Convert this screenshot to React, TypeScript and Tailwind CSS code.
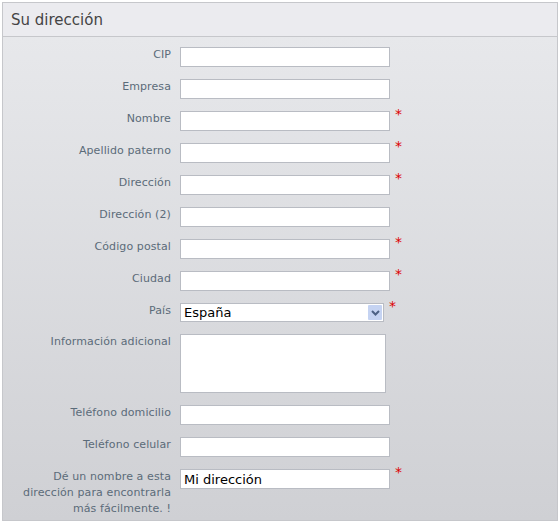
const fields = [
  { label: "CIP", req: false },
  { label: "Empresa", req: false },
  { label: "Nombre", req: true },
  { label: "Apellido paterno", req: true },
  { label: "Dirección", req: true },
  { label: "Dirección (2)", req: false },
  { label: "Código postal", req: true },
  { label: "Ciudad", req: true },
];

function Star() {
  return <span className="ml-[5px] -mt-[4px] text-[14px] leading-none text-[#dd0000]">*</span>;
}

function Row({ label, children }: { label: React.ReactNode; children: React.ReactNode }) {
  return (
    <div className="flex shrink-0 items-start">
      <div className="w-[177px] shrink-0 pl-[10px] pr-[9px] text-right text-[11px] leading-[16px] tracking-[0.1px] text-[#5b6b79]">
        {label}
      </div>
      <div className="flex items-start">{children}</div>
    </div>
  );
}

export default function App() {
  return (
    <div className="h-[522px] overflow-hidden pl-[2px] pr-[2px] pt-[2px] font-['DejaVu_Sans',sans-serif]">
      <div className="flex h-[519px] w-[556px] flex-col overflow-hidden border border-[#c6c7cb]">
        <div className="h-[34px] shrink-0 border-b border-[#c6c7cb] bg-[#ebebef] pl-[8px] pt-[8px] text-[15px] leading-[18px] text-[#444444]">
          Su dirección
        </div>
        <div className="flex flex-1 flex-col gap-[12px] bg-gradient-to-b from-[#e7e8eb] to-[#cfd0d4] pt-[10px]">
          {fields.map((f) => (
            <Row key={f.label} label={f.label}>
              <input className="h-[20px] w-[210px] border border-[#b9bcc3] bg-white" />
              {f.req && <Star />}
            </Row>
          ))}
          <Row label="País">
            <div className="flex h-[19px] w-[204px] items-center justify-between border border-[#b9bcc3] bg-white pl-[3px] pr-[1px]">
              <span className="text-[13px] leading-none text-black">España</span>
              <span className="flex h-[15px] w-[14px] items-center justify-center rounded-[1px] bg-[#c5d3f2]">
                <svg width="9" height="6" viewBox="0 0 9 6">
                  <path d="M1 1 L4.5 4.5 L8 1" stroke="#4d6185" strokeWidth="2" fill="none" />
                </svg>
              </span>
            </div>
            <Star />
          </Row>
          <Row label="Información adicional">
            <textarea className="h-[59px] w-[206px] resize-none border border-[#b9bcc3] bg-white" />
          </Row>
          <Row label="Teléfono domicilio">
            <input className="h-[20px] w-[210px] border border-[#b9bcc3] bg-white" />
          </Row>
          <Row label="Teléfono celular">
            <input className="h-[20px] w-[210px] border border-[#b9bcc3] bg-white" />
          </Row>
          <Row label="Dé un nombre a esta dirección para encontrarla más fácilmente. !">
            <input
              defaultValue="Mi dirección"
              className="h-[20px] w-[210px] border border-[#b9bcc3] bg-white px-[3px] text-[13px] text-black"
            />
            <Star />
          </Row>
        </div>
      </div>
    </div>
  );
}
